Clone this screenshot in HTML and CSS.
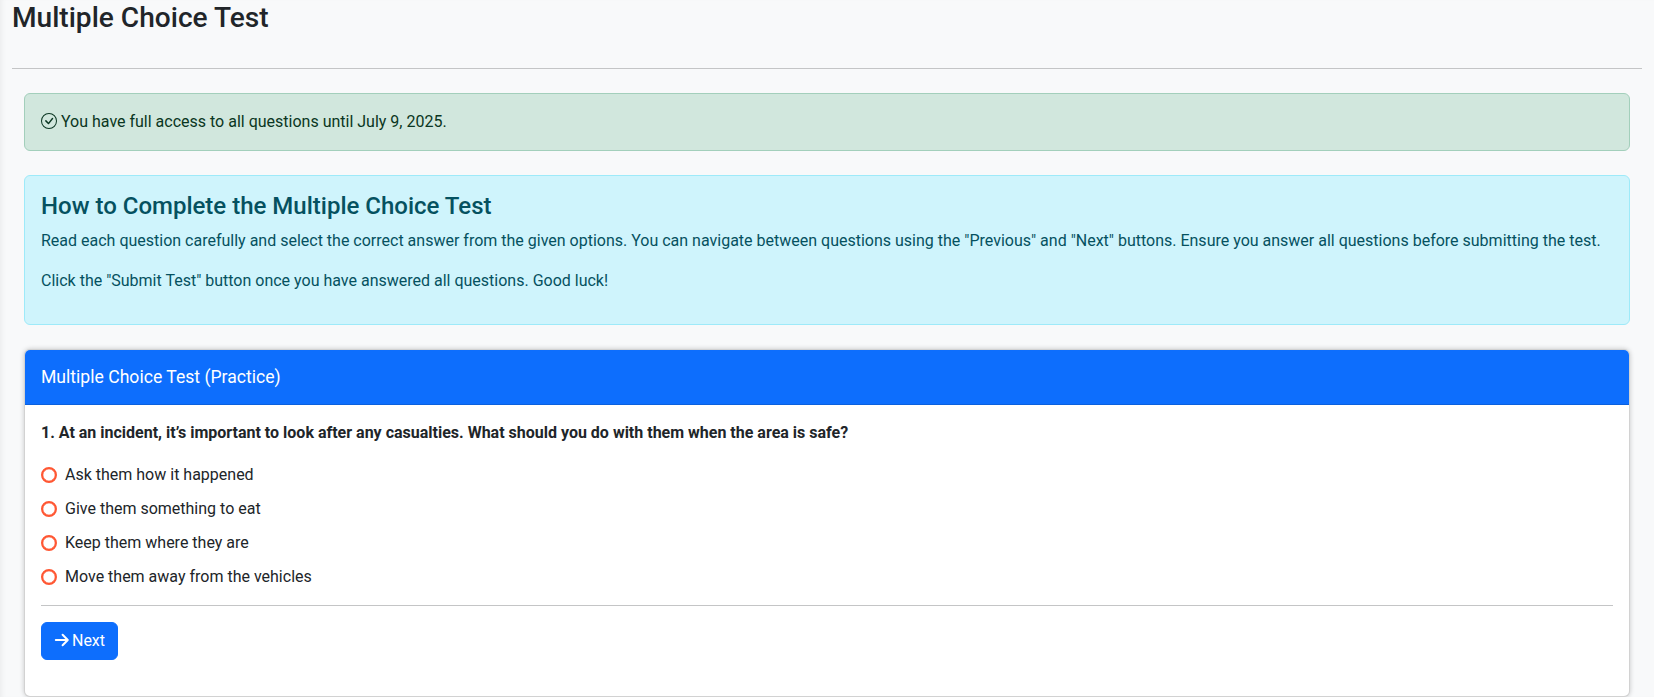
FILE: index.html
```html
<!DOCTYPE html>
<html lang="en">

<head>
    <meta charset="UTF-8">
    <meta name="viewport" content="width=device-width, initial-scale=1.0">
    <title>Multiple Choice Test</title>
    <link rel="stylesheet" href="styles.css">
</head>

<body>
    <main class="content">
        <h1 class="page-title">Multiple Choice Test</h1>
        <hr class="page-rule">

        <div class="inner">
            <div class="alert alert-success">
                <svg class="check-icon" width="16" height="16" viewBox="0 0 16 16" fill="currentColor" aria-hidden="true">
                    <path d="M8 15A7 7 0 1 1 8 1a7 7 0 0 1 0 14m0 1A8 8 0 1 0 8 0a8 8 0 0 0 0 16" />
                    <path d="m10.97 4.97-.02.022-3.473 4.425-2.093-2.094a.75.75 0 0 0-1.06 1.06L6.97 11.03a.75.75 0 0 0 1.079-.02l3.992-4.99a.75.75 0 0 0-1.071-1.05" />
                </svg>
                You have full access to all questions until July 9, 2025.
            </div>

            <div class="alert alert-info">
                <h2 class="info-title">How to Complete the Multiple Choice Test</h2>
                <p>Read each question carefully and select the correct answer from the given options. You can navigate between questions using the "Previous" and "Next" buttons. Ensure you answer all questions before submitting the test.</p>
                <p>Click the "Submit Test" button once you have answered all questions. Good luck!</p>
            </div>

            <div class="card">
                <div class="card-header">Multiple Choice Test (Practice)</div>
                <div class="card-body">
                    <p class="question">1. At an incident, it’s important to look after any casualties. What should you do with them when the area is safe?</p>

                    <label class="option"><input type="radio" name="q1"> Ask them how it happened</label>
                    <label class="option"><input type="radio" name="q1"> Give them something to eat</label>
                    <label class="option"><input type="radio" name="q1"> Keep them where they are</label>
                    <label class="option"><input type="radio" name="q1"> Move them away from the vehicles</label>

                    <hr class="card-rule">

                    <button type="button" class="btn-next">
                        <svg width="16" height="16" viewBox="0 0 16 16" fill="none" stroke="currentColor" stroke-width="2" stroke-linecap="round" stroke-linejoin="round" aria-hidden="true">
                            <path d="M1.8 8h12M8.6 2.8 13.8 8l-5.2 5.2" />
                        </svg>
                        Next
                    </button>
                </div>
            </div>
        </div>
    </main>
</body>

</html>
```

FILE: styles.css
```css
* {
    box-sizing: border-box;
}

body {
    margin: 0;
    min-height: 100vh;
    font-family: Roboto, Arial, sans-serif;
    font-size: 16px;
    line-height: 1.5;
    color: #212529;
    background-color: #f8f9fa;
    box-shadow: inset 5px 0 5px -3px rgba(0, 0, 0, .05);
}

.content {
    padding: 1px 12px 0;
}

.page-title {
    margin: 0;
    padding-bottom: 33px;
    font-size: 28.1px;
    font-weight: 500;
    line-height: 34px;
}

.page-rule {
    margin: 0 0 24px;
    border: none;
    border-top: 1px solid #c4c5c6;
}

.inner {
    padding: 0 12px;
}

.alert {
    margin-bottom: 24px;
    padding: 16px;
    border: 1px solid transparent;
    border-radius: 6px;
}

.alert-success {
    color: #0a3622;
    background-color: #d1e7dd;
    border-color: #a3cfbb;
}

.check-icon {
    vertical-align: -2px;
}

.alert-info {
    padding-bottom: 15px;
    color: #055160;
    background-color: #cff4fc;
    border-color: #9eeaf9;
}

.info-title {
    margin: 0 0 8px;
    font-size: 24px;
    font-weight: 500;
    line-height: 29px;
}

.alert-info p {
    margin: 0 0 16px;
}

.card {
    background-color: #fff;
    border: 1px solid rgba(0, 0, 0, .175);
    border-radius: 6px;
    box-shadow: 0 0 5px rgba(0, 0, 0, .2);
    overflow: hidden;
}

.card-header {
    padding: 14px 16px;
    font-size: 17.6px;
    line-height: 26px;
    color: #fff;
    background-color: #0d6efd;
    border-bottom: 1px solid rgba(0, 0, 0, .125);
}

.card-body {
    padding: 16px 16px 36px;
}

.question {
    margin: 0 0 13px;
    font-weight: 700;
}

.option {
    display: flex;
    align-items: center;
    gap: 8px;
    height: 34px;
}

.option input {
    appearance: none;
    width: 16px;
    height: 16px;
    margin: 0;
    background-color: #fff;
    border: 2px solid #ff5733;
    border-radius: 50%;
    box-shadow: inset 0 0 0 .25px #ff5733;
}

.card-rule {
    margin: 11px 0 16px;
    border: none;
    border-top: 1px solid #c4c5c6;
}

.btn-next {
    padding: 6px 12px;
    font-family: inherit;
    font-size: 16px;
    line-height: 24px;
    color: #fff;
    background-color: #0d6efd;
    border: 1px solid #0d6efd;
    border-radius: 6px;
    cursor: pointer;
}

.btn-next svg {
    margin-right: -2px;
    vertical-align: -2px;
}
```
